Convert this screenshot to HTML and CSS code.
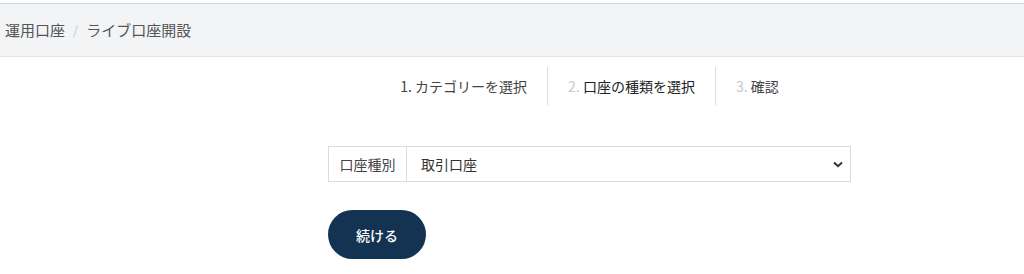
FILE: index.html
```html
<!DOCTYPE html>
<html lang="ja">
<head>
<meta charset="utf-8">
<link rel="stylesheet" href="styles.css">
</head>
<body>
<div class="page">
  <nav class="breadcrumb">
    <span class="crumb">運用口座</span>
    <span class="sep">/</span>
    <span class="crumb">ライブ口座開設</span>
  </nav>
  <main class="content">
    <ol class="steps">
      <li class="step done"><span class="num">1.</span> カテゴリーを選択</li>
      <li class="step active"><span class="num">2.</span> 口座の種類を選択</li>
      <li class="step"><span class="num">3.</span> 確認</li>
    </ol>
    <div class="field">
      <label class="field-label" for="acc">口座種別</label>
      <div class="select-wrap">
        <select id="acc" class="select">
          <option>取引口座</option>
        </select>
        <svg class="chev" width="10" height="7" viewBox="0 0 10 7"><path d="M1 1.5 L5 5.2 L9 1.5" fill="none" stroke="#333" stroke-width="2"/></svg>
      </div>
    </div>
    <button class="btn">続ける</button>
  </main>
</div>
</body>
</html>
```
FILE: styles.css
```css
* { box-sizing: border-box; }
html, body { margin: 0; padding: 0; background: #fff; }
body {
  font-family: "Noto Sans CJK JP", "Noto Sans", sans-serif;
  color: #333;
}
.page { padding-top: 3px; }
.breadcrumb {
  height: 54px;
  background: #f3f4f6;
  border-top: 1px solid #cfd1d4;
  border-bottom: 1px solid #e3e4e6;
  display: flex;
  align-items: center;
  padding: 0 5px 2px;
  font-size: 15px;
  color: #555;
}
.breadcrumb .sep { color: #c8c8c8; margin: 0 8px; font-size: 13px; }
.content {
  width: 523px;
  margin-left: 328px;
  display: flex;
  flex-direction: column;
  align-items: flex-start;
}
.steps {
  list-style: none;
  margin: 10px 0 0;
  padding: 0;
  align-self: center;
  display: flex;
  font-size: 14px;
  color: #444;
}
.step {
  padding: 0 20px;
  height: 38px;
  display: flex;
  align-items: center;
  border-left: 1px solid #dcdcdc;
  white-space: pre;
}
.step:first-child { border-left: none; }
.step .num { color: #c8c8c8; }
.step.done .num { color: #444; }
.step.active { color: #222; }
.field {
  margin-top: 41px;
  width: 523px;
  height: 36px;
  display: flex;
  border: 1px solid #dadada;
}
.field-label {
  width: 78px;
  border-right: 1px solid #dadada;
  display: flex;
  align-items: center;
  justify-content: center;
  font-size: 14px;
  color: #444;
}
.select-wrap { flex: 1; position: relative; }
.select {
  appearance: none;
  -webkit-appearance: none;
  width: 100%;
  height: 100%;
  border: none;
  background: #fff;
  font-family: inherit;
  font-size: 14px;
  color: #333;
  padding: 0 30px 0 14px;
  outline: none;
}
.chev { position: absolute; right: 7px; top: 14px; pointer-events: none; }
.btn {
  margin-top: 28px;
  width: 98px;
  height: 49px;
  border: none;
  border-radius: 25px;
  background: #143252;
  color: #fff;
  font-family: inherit;
  font-size: 14px;
  font-weight: 500;
  cursor: pointer;
}
```
